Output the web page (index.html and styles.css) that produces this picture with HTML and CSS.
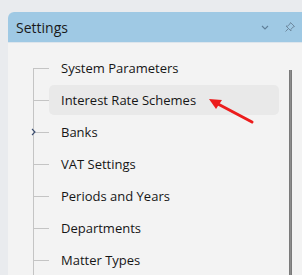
FILE: index.html
```html
<!DOCTYPE html>
<html lang="en">
<head>
    <meta charset="UTF-8">
    <meta name="viewport" content="width=device-width, initial-scale=1.0">
    <title>Settings</title>
    <link rel="stylesheet" href="styles.css">
</head>
<body>
    <div class="panel">
        <header class="panel-head">
            <h1>Settings</h1>
            <div class="head-tools">
                <!-- collapse -->
                <svg class="tool" width="10" height="10" viewBox="0 0 10 10">
                    <path d="M2 4 L5 7 L8 4" fill="none" stroke="#5f7f99" stroke-width="1.1"/>
                </svg>
                <!-- pin -->
                <svg class="tool" width="12" height="12" viewBox="0 0 12 12">
                    <path d="M6.5 1.5 L10.5 5.5 L8.8 6.2 L6.8 8.6 L7 10 L2 5 L3.4 5.2 L5.8 3.2 Z M4.4 7.6 L1.5 10.5" fill="none" stroke="#6f8aa0" stroke-width="1" stroke-linejoin="round"/>
                </svg>
            </div>
        </header>

        <div class="panel-body">
            <ul class="tree">
                <li class="node first"><span class="branch"></span><span class="label">System Parameters</span></li>
                <li class="node"><span class="branch"></span><span class="label selected">Interest Rate Schemes</span></li>
                <li class="node"><span class="branch">
                    <svg class="expander" width="6" height="8" viewBox="0 0 6 8">
                        <path d="M1 1 L4 4 L1 7" fill="none" stroke="#3b4d70" stroke-width="1.1"/>
                    </svg>
                </span><span class="label">Banks</span></li>
                <li class="node"><span class="branch"></span><span class="label">VAT Settings</span></li>
                <li class="node"><span class="branch"></span><span class="label">Periods and Years</span></li>
                <li class="node"><span class="branch"></span><span class="label">Departments</span></li>
                <li class="node"><span class="branch"></span><span class="label">Matter Types</span></li>
            </ul>
            <div class="scroll">
                <div class="thumb"></div>
            </div>
        </div>
    </div>

    <!-- callout arrow pointing at the selected item -->
    <svg class="callout" width="50" height="30" viewBox="0 0 50 30">
        <line x1="46" y1="25" x2="12" y2="7" stroke="#ec1c1c" stroke-width="3" stroke-linecap="round"/>
        <path d="M3 2 L16 3 L10 12 Z" fill="#ec1c1c"/>
    </svg>
</body>
</html>
```

FILE: styles.css
```css
/* Reset default browser styling */
* {
    margin: 0;
    padding: 0;
    box-sizing: border-box;
}

body {
    font-family: 'Open Sans', 'Noto Sans', sans-serif;
    background-color: #e9ebee;
    color: #161616;
    height: 275px;
    overflow: hidden;
    position: relative;
}

/* Panel */
.panel {
    margin: 12px 0 0 8px;
    height: 263px;
    background-color: #f3f3f3;
    border-top-left-radius: 6px;
    overflow: hidden;
}

.panel-head {
    height: 31px;
    display: flex;
    align-items: center;
    justify-content: space-between;
    padding-left: 8px;
    background-color: #9fc9e4;
    border-bottom: 1px solid #dde5ec;
}

.panel-head h1 {
    font-size: 14px;
    font-weight: normal;
    color: #1a1a1a;
}

.head-tools {
    display: flex;
    align-items: center;
    gap: 14px;
    padding-right: 6px;
}

.tool {
    display: block;
}

/* Tree */
.panel-body {
    display: flex;
}

.tree {
    flex: 1;
    list-style: none;
    padding: 9px 10px 0 25px;
}

.node {
    height: 32px;
    display: flex;
    align-items: center;
    background:
        linear-gradient(#c4c4c4, #c4c4c4) no-repeat 0 0 / 1px 100%,
        linear-gradient(#c4c4c4, #c4c4c4) no-repeat 0 50% / 16px 1px;
}

.node.first {
    background:
        linear-gradient(#c4c4c4, #c4c4c4) no-repeat 0 100% / 1px 50%,
        linear-gradient(#c4c4c4, #c4c4c4) no-repeat 0 50% / 16px 1px;
}

.branch {
    width: 16px;
    height: 100%;
    display: flex;
    align-items: center;
}

.expander {
    display: block;
    margin-left: -2px;
}

.label {
    flex: 1;
    height: 30px;
    display: flex;
    align-items: center;
    padding-left: 12px;
    font-size: 13px;
    border-radius: 5px;
}

.label.selected {
    background-color: #e9e9e9;
}

/* Scrollbar */
.scroll {
    width: 3px;
    margin-right: 10px;
    padding-top: 27px;
}

.thumb {
    height: 240px;
    background-color: #8c8c8c;
    border-left: 1px solid #7a7a7a;
    border-right: 1px solid #7a7a7a;
}

/* Red callout arrow */
.callout {
    position: absolute;
    left: 206px;
    top: 97px;
}
```
